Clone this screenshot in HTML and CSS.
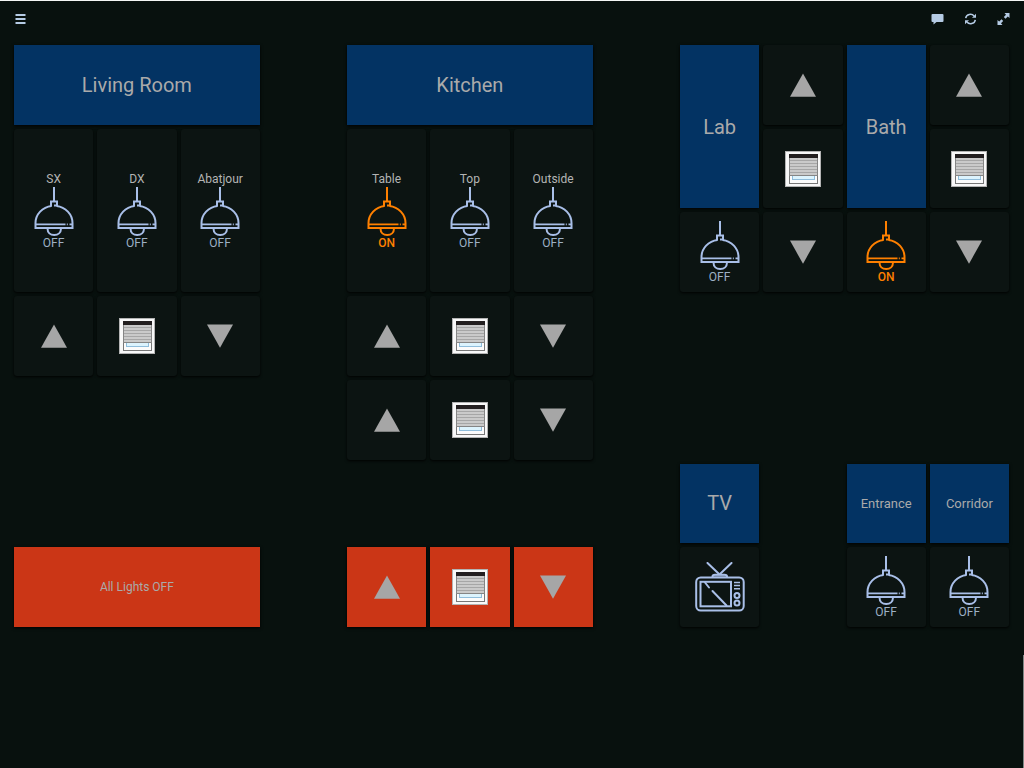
FILE: index.html
```html
<!DOCTYPE html>
<html lang="en">
<head>
<meta charset="utf-8">
<meta name="viewport" content="width=device-width, initial-scale=1">
<title>Home</title>
<link rel="stylesheet" href="styles.css">
</head>
<body>
<svg class="sprite" aria-hidden="true">
  <symbol id="lamp" viewBox="0 0 48 49">
    <g fill="none" stroke="currentColor" stroke-width="2">
      <path d="M24 0V14"/>
      <path d="M21 19.500V14.500H27V19.500M24 18.500H26"/>
      <path d="M21.500 19C12.500 20 5.500 27.500 5.500 36V41H42.500V36C42.500 27.500 35.500 20 26.500 19"/>
      <path d="M6 37.300H35.500M36.800 37.300H37.800M39.500 37.300H42.500" stroke-width="1.700"/>
      <path d="M17.500 41.500C17.500 45.500 20.300 48 24.200 48S31 45.500 31 41.500"/>
    </g>
  </symbol>
  <symbol id="up" viewBox="0 0 26 24"><path fill="currentColor" d="M13 0.500L26 23.800H0Z"/></symbol>
  <symbol id="down" viewBox="0 0 26 24"><path fill="currentColor" d="M0 0.500H26L13 23.800Z"/></symbol>
  <symbol id="shutter" viewBox="0 0 36 36">
    <rect width="36" height="36" fill="#b4b4b4"/>
    <rect x="1" y="1" width="34" height="34" fill="#f8f8f8"/>
    <rect x="4" y="3" width="29" height="30" fill="#777"/>
    <rect x="5" y="24" width="27" height="8" fill="#fbfbfb"/>
    <rect x="7" y="24" width="23" height="5" fill="#8fbddb"/>
    <rect x="8" y="24" width="21" height="4" fill="#dcf3fd"/>
    <rect x="4" y="3" width="29" height="4" fill="#231f20"/>
    <rect x="4" y="7" width="29" height="18" fill="#858585"/>
    <rect x="5" y="7" width="27" height="17" fill="#cacaca"/>
    <path d="M5 9.500H32M5 12.500H32M5 15.500H32M5 18.500H32M5 21.500H32" stroke="#a6a6a6"/>
  </symbol>
  <symbol id="tv" viewBox="0 0 50 50">
    <g fill="none" stroke="currentColor" stroke-width="2" stroke-linecap="round">
      <path d="M12.500 1L23.500 11.500M36.500 1L25.500 11.500"/>
      <path d="M17.500 15V14.500Q17.500 12.800 20 12.800H29.500Q32 12.800 32 14.500V15" fill="#56677b"/>
      <rect x="1.200" y="15.500" width="47.500" height="33" rx="4.500"/>
      <rect x="5.500" y="19.800" width="30.500" height="24.500"/>
      <path d="M10 20.500L14 25.500M17.500 29L31.500 43.500"/>
      <path d="M39 20.500H45M39 23.500H45M39 26.800H45" stroke-linecap="butt" stroke-width="1.600"/>
      <circle cx="42" cy="33.500" r="2.500"/><circle cx="42" cy="41" r="2.500"/>
    </g>
  </symbol>
</svg>

<header class="toolbar">
  <button class="tool" aria-label="Menu"><svg class="tool-icon" viewBox="0 0 12 12"><path d="M1 2H11M1 6H11M1 10H11" stroke="currentColor" stroke-width="2"/></svg></button>
  <div class="tools">
    <button class="tool" aria-label="Messages"><svg class="tool-icon" viewBox="0 0 12 12"><path fill="currentColor" d="M1 1H11Q12 1 12 2V8Q12 9 11 9H5L2 11.500V9H1Q0 9 0 8V2Q0 1 1 1Z"/></svg></button>
    <button class="tool" aria-label="Refresh"><svg class="tool-icon" viewBox="0 0 12 12"><path d="M1.200 5.200C1.800 1 7.300 0 9.500 3M10.800 6.800C10.200 11 4.700 12 2.500 9" fill="none" stroke="currentColor" stroke-width="1.500"/><path fill="currentColor" d="M11.500 0.800V4.800H7.500ZM0.500 11.200V7.200H4.500Z"/></svg></button>
    <button class="tool" aria-label="Full screen"><svg class="tool-icon" viewBox="0 0 12 12"><path fill="currentColor" d="M7 0H12V5L10.300 3.500L8 5.700L6.300 4L8.500 1.700ZM5 12H0V7L1.700 8.500L4 6.300L5.700 8L3.500 10.300Z"/></svg></button>
  </div>
</header>

<main class="board">
  <h2 class="tile title c1 w3 r1">Living Room</h2>
  <button class="tile c1 r2 h2"><span class="label">SX</span><svg class="lamp"><use href="#lamp"/></svg><span class="state">OFF</span></button>
  <button class="tile c2 r2 h2"><span class="label">DX</span><svg class="lamp"><use href="#lamp"/></svg><span class="state">OFF</span></button>
  <button class="tile c3 r2 h2"><span class="label">Abatjour</span><svg class="lamp"><use href="#lamp"/></svg><span class="state">OFF</span></button>
  <button class="tile c1 r4" aria-label="Living room shutter up"><svg class="arrow"><use href="#up"/></svg></button>
  <button class="tile c2 r4" aria-label="Living room shutter"><svg class="shutter"><use href="#shutter"/></svg></button>
  <button class="tile c3 r4" aria-label="Living room shutter down"><svg class="arrow"><use href="#down"/></svg></button>
  <button class="tile alert c1 w3 r7">All Lights OFF</button>

  <h2 class="tile title c5 w3 r1">Kitchen</h2>
  <button class="tile on c5 r2 h2"><span class="label">Table</span><svg class="lamp"><use href="#lamp"/></svg><span class="state">ON</span></button>
  <button class="tile c6 r2 h2"><span class="label">Top</span><svg class="lamp"><use href="#lamp"/></svg><span class="state">OFF</span></button>
  <button class="tile c7 r2 h2"><span class="label">Outside</span><svg class="lamp"><use href="#lamp"/></svg><span class="state">OFF</span></button>
  <button class="tile c5 r4" aria-label="Kitchen shutter 1 up"><svg class="arrow"><use href="#up"/></svg></button>
  <button class="tile c6 r4" aria-label="Kitchen shutter 1"><svg class="shutter"><use href="#shutter"/></svg></button>
  <button class="tile c7 r4" aria-label="Kitchen shutter 1 down"><svg class="arrow"><use href="#down"/></svg></button>
  <button class="tile c5 r5" aria-label="Kitchen shutter 2 up"><svg class="arrow"><use href="#up"/></svg></button>
  <button class="tile c6 r5" aria-label="Kitchen shutter 2"><svg class="shutter"><use href="#shutter"/></svg></button>
  <button class="tile c7 r5" aria-label="Kitchen shutter 2 down"><svg class="arrow"><use href="#down"/></svg></button>
  <button class="tile alert c5 r7" aria-label="All shutters up"><svg class="arrow"><use href="#up"/></svg></button>
  <button class="tile alert c6 r7" aria-label="All shutters"><svg class="shutter"><use href="#shutter"/></svg></button>
  <button class="tile alert c7 r7" aria-label="All shutters down"><svg class="arrow"><use href="#down"/></svg></button>

  <h2 class="tile title c9 r1 h2">Lab</h2>
  <button class="tile c9 r3" aria-label="Lab light"><svg class="lamp"><use href="#lamp"/></svg><span class="state">OFF</span></button>
  <button class="tile c10 r1" aria-label="Lab shutter up"><svg class="arrow"><use href="#up"/></svg></button>
  <button class="tile c10 r2" aria-label="Lab shutter"><svg class="shutter"><use href="#shutter"/></svg></button>
  <button class="tile c10 r3" aria-label="Lab shutter down"><svg class="arrow"><use href="#down"/></svg></button>

  <h2 class="tile title c11 r1 h2">Bath</h2>
  <button class="tile on c11 r3" aria-label="Bath light"><svg class="lamp"><use href="#lamp"/></svg><span class="state">ON</span></button>
  <button class="tile c12 r1" aria-label="Bath shutter up"><svg class="arrow"><use href="#up"/></svg></button>
  <button class="tile c12 r2" aria-label="Bath shutter"><svg class="shutter"><use href="#shutter"/></svg></button>
  <button class="tile c12 r3" aria-label="Bath shutter down"><svg class="arrow"><use href="#down"/></svg></button>

  <h2 class="tile title c9 r6">TV</h2>
  <button class="tile c9 r7" aria-label="TV power"><svg class="tv"><use href="#tv"/></svg></button>
  <h2 class="tile title small c11 r6">Entrance</h2>
  <button class="tile c11 r7" aria-label="Entrance light"><svg class="lamp"><use href="#lamp"/></svg><span class="state">OFF</span></button>
  <h2 class="tile title small c12 r6">Corridor</h2>
  <button class="tile c12 r7" aria-label="Corridor light"><svg class="lamp"><use href="#lamp"/></svg><span class="state">OFF</span></button>
</main>
<div class="scroll-thumb"></div>
</body>
</html>
```

FILE: styles.css
```css
* {
  box-sizing: border-box;
}

body {
  margin: 0;
  min-height: 100vh;
  border-top: 1px solid #f4f6f5;
  background: #08110e;
  color: #aaa;
  font-family: Roboto, "Liberation Sans", sans-serif;
  font-size: 12px;
}

.sprite {
  display: none;
}

.toolbar {
  display: flex;
  justify-content: space-between;
  align-items: center;
  height: 35px;
  padding: 0 14px;
}

.tools {
  display: flex;
  gap: 20px;
}

.tool {
  display: flex;
  padding: 0;
  border: 0;
  background: none;
  color: #b5cbe4;
}

.tools .tool {
  width: 13px;
}

.tool-icon {
  width: 13px;
  height: 12px;
}

.board {
  display: grid;
  grid-template-columns: repeat(12, 1fr);
  grid-template-rows: repeat(7, 1fr);
  gap: 4px;
  min-height: 582px;
  padding: 0 15px 0 14px;
  margin-top: 9px;
}

.tile {
  display: flex;
  flex-direction: column;
  align-items: center;
  justify-content: center;
  min-width: 0;
  margin: 0;
  padding: 0;
  border: 0;
  border-radius: 3px;
  background: #0c1412;
  box-shadow: 0 1px 3px #000;
  color: #aaa;
  font-family: inherit;
  font-size: 12px;
}

.title {
  border-radius: 0;
  background: #033363;
  font-size: 20px;
  font-weight: 400;
}

.small {
  font-size: 13px;
}

.alert {
  border-radius: 0;
  background: #cb3616;
}

.label {
  line-height: 16px;
  color: #b4b4b4;
}

.lamp {
  width: 48px;
  height: 49px;
  color: #a9bfe8;
}

.state {
  line-height: 14px;
  color: #9db0c4;
}

.on .lamp,
.on .state {
  color: #ff8000;
}

.on .state {
  font-weight: 500;
}

.arrow {
  width: 26px;
  height: 24px;
  color: #a6a6a6;
}

.shutter {
  width: 36px;
  height: 36px;
}

.tv {
  width: 50px;
  height: 50px;
  color: #a9bfe8;
}

.c1 { grid-column-start: 1; }
.c2 { grid-column-start: 2; }
.c3 { grid-column-start: 3; }
.c5 { grid-column-start: 5; }
.c6 { grid-column-start: 6; }
.c7 { grid-column-start: 7; }
.c9 { grid-column-start: 9; }
.c10 { grid-column-start: 10; }
.c11 { grid-column-start: 11; }
.c12 { grid-column-start: 12; }
.w3 { grid-column-end: span 3; }

.r1 { grid-row-start: 1; }
.r2 { grid-row-start: 2; }
.r3 { grid-row-start: 3; }
.r4 { grid-row-start: 4; }
.r5 { grid-row-start: 5; }
.r6 { grid-row-start: 6; }
.r7 { grid-row-start: 7; }
.h2 { grid-row-end: span 2; }

.scroll-thumb {
  position: fixed;
  right: 0;
  bottom: 0;
  width: 1px;
  height: 113px;
  background: #7d8784;
}
```
